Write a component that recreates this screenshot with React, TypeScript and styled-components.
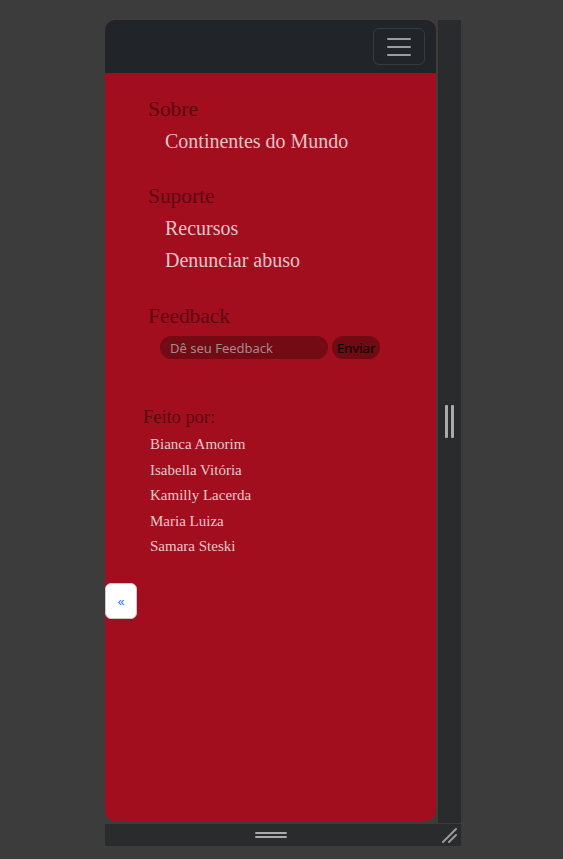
import React from "react";
import styled, { createGlobalStyle } from "styled-components";

const Global = createGlobalStyle`
  html, body { margin: 0; padding: 0; background: #3c3c3c; }
  body { font-family: "Liberation Serif", "Times New Roman", serif; }
  * { box-sizing: border-box; }
`;

const Stage = styled.div`
  padding: 20px 0 13px 105px;
  min-height: 859px;
`;

const Frame = styled.div`
  display: grid;
  grid-template-columns: 331px 2px 23px;
  grid-template-rows: 803px 22px;
  row-gap: 1px;
  width: 356px;
`;

const Viewport = styled.div`
  grid-column: 1;
  grid-row: 1;
  height: 801px;
  background: #a20e1e;
  border-radius: 10px;
  overflow: hidden;
  display: flex;
  flex-direction: column;
`;

const SideStrip = styled.div`
  grid-column: 3;
  grid-row: 1;
  background: #2a2b2d;
  display: flex;
  align-items: center;
  justify-content: center;
  gap: 3px;
`;

const GripLine = styled.span<{ $vertical?: boolean }>`
  display: block;
  background: #aaaaaa;
  border-radius: 1px;
  width: ${(p) => (p.$vertical ? "3px" : "32px")};
  height: ${(p) => (p.$vertical ? "33px" : "2px")};
`;

const BottomStrip = styled.div`
  grid-column: 1 / span 3;
  grid-row: 2;
  background: #2a2b2d;
  display: grid;
  grid-template-columns: 331px 1fr;
  align-items: center;
`;

const HGrip = styled.div`
  display: flex;
  flex-direction: column;
  align-items: center;
  gap: 2px;
`;

const Corner = styled.div`
  display: flex;
  justify-content: flex-end;
  padding-right: 4px;
`;

const NavBar = styled.nav`
  background: #212529;
  padding: 8px 11px 8px 12px;
  display: flex;
  justify-content: flex-end;
  flex: none;
`;

const Toggler = styled.button`
  width: 52px;
  height: 37px;
  border: 1px solid rgba(255, 255, 255, 0.1);
  border-radius: 6px;
  background: transparent;
  display: flex;
  align-items: center;
  justify-content: center;
  padding: 0;
`;

const Content = styled.main`
  padding-top: 23px;
  display: flex;
  flex-direction: column;
`;

const Section = styled.section<{ $gap?: number }>`
  padding-left: 43px;
  margin-bottom: ${(p) => p.$gap ?? 26}px;
`;

const Heading = styled.h4`
  margin: 0 0 3px;
  font-family: "Liberation Serif", "Times New Roman", serif;
  font-weight: 400;
  font-size: 21.4px;
  line-height: 26px;
  color: #5a0811;
`;

const LinkList = styled.ul`
  list-style: none;
  margin: 0;
  padding: 0 0 0 17px;
`;

const LinkItem = styled.li`
  font-size: 20px;
  line-height: 32px;
  color: #e6c3c7;
`;

const FeedbackForm = styled.form`
  display: flex;
  gap: 4px;
  margin-top: 7px;
  padding-left: 12px;
`;

const FeedbackInput = styled.input`
  width: 168px;
  height: 23px;
  border: none;
  outline: none;
  border-radius: 12px;
  background: #730a14;
  padding: 0 0 0 10px;
  font-family: "Noto Sans", "Open Sans", sans-serif;
  font-size: 13px;
  color: #e6c3c7;
  &::placeholder {
    color: #a48a8f;
  }
`;

const SendButton = styled.button`
  height: 23px;
  border: none;
  border-radius: 12px;
  background: #700a13;
  padding: 0 5px;
  font-family: "Noto Sans", "Open Sans", sans-serif;
  font-size: 13.2px;
  color: #000;
`;

const Credits = styled.section`
  margin-top: 21px;
  padding-left: 38px;
`;

const CreditsTitle = styled.h5`
  margin: 0 0 4px;
  font-weight: 400;
  font-size: 18.4px;
  line-height: 22px;
  color: #5a0811;
`;

const NameList = styled.ul`
  list-style: none;
  margin: 0;
  padding: 0 0 0 7px;
`;

const Name = styled.li`
  font-size: 15px;
  line-height: 25.5px;
  color: #e8c8cb;
`;

const BackButton = styled.button`
  margin-top: 23px;
  width: 32px;
  height: 36px;
  background: #fff;
  border: 1px solid #c9c9c9;
  border-radius: 6px;
  color: #0d6efd;
  font-family: "Liberation Sans", Arial, sans-serif;
  font-size: 12px;
  padding: 3px 0 0;
  align-self: flex-start;
`;

const names = [
  "Bianca Amorim",
  "Isabella Vitória",
  "Kamilly Lacerda",
  "Maria Luiza",
  "Samara Steski",
];

export default function App() {
  return (
    <>
      <Global />
      <Stage>
        <Frame>
          <Viewport>
            <NavBar>
              <Toggler aria-label="menu">
                <svg width="30" height="30" viewBox="0 0 30 30">
                  <path
                    d="M4 7h22M4 15h22M4 23h22"
                    stroke="rgba(255,255,255,0.55)"
                    strokeWidth="2"
                    strokeLinecap="round"
                  />
                </svg>
              </Toggler>
            </NavBar>
            <Content>
              <Section>
                <Heading>Sobre</Heading>
                <LinkList>
                  <LinkItem>Continentes do Mundo</LinkItem>
                </LinkList>
              </Section>
              <Section $gap={27}>
                <Heading>Suporte</Heading>
                <LinkList>
                  <LinkItem>Recursos</LinkItem>
                  <LinkItem>Denunciar abuso</LinkItem>
                </LinkList>
              </Section>
              <Section>
                <Heading>Feedback</Heading>
                <FeedbackForm onSubmit={(e) => e.preventDefault()}>
                  <FeedbackInput placeholder="Dê seu Feedback" />
                  <SendButton type="submit">Enviar</SendButton>
                </FeedbackForm>
              </Section>
              <Credits>
                <CreditsTitle>Feito por:</CreditsTitle>
                <NameList>
                  {names.map((n) => (
                    <Name key={n}>{n}</Name>
                  ))}
                </NameList>
              </Credits>
              <BackButton>«</BackButton>
            </Content>
          </Viewport>
          <SideStrip>
            <GripLine $vertical />
            <GripLine $vertical />
          </SideStrip>
          <BottomStrip>
            <HGrip>
              <GripLine />
              <GripLine />
            </HGrip>
            <Corner>
              <svg width="16" height="16" viewBox="0 0 16 16">
                <path
                  d="M2 15L15 2M8 15L15 8"
                  stroke="#9a9a9a"
                  strokeWidth="2"
                  strokeLinecap="round"
                />
              </svg>
            </Corner>
          </BottomStrip>
        </Frame>
      </Stage>
    </>
  );
}
